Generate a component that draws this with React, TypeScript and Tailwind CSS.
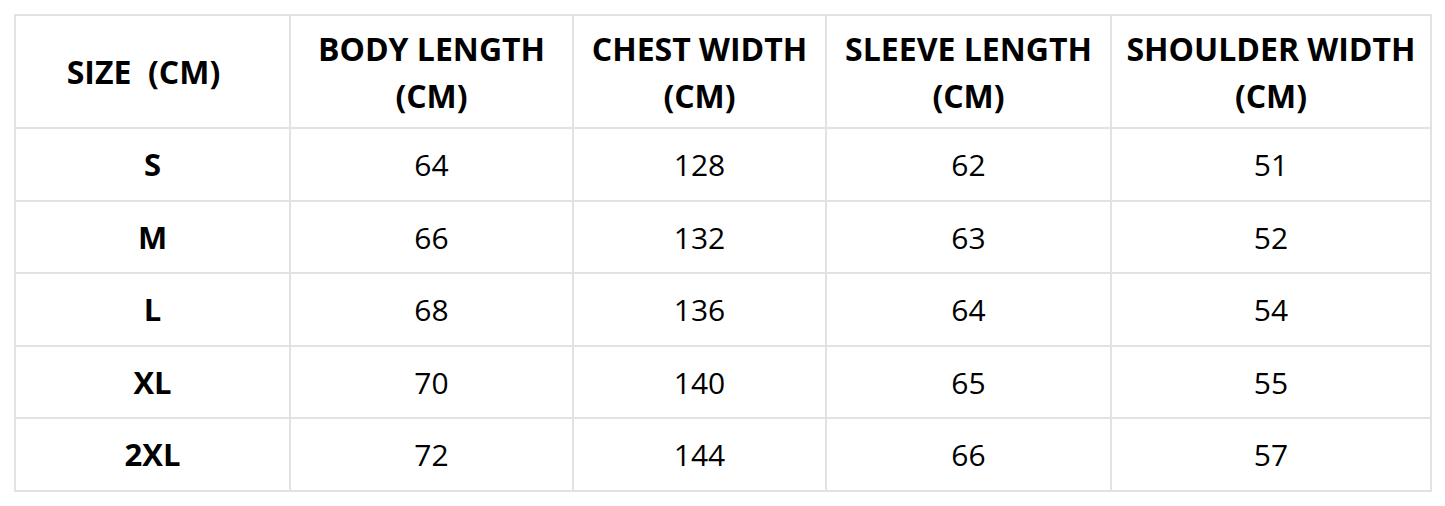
import React from 'react';

const headers = [
  ['SIZE  (CM)'],
  ['BODY LENGTH', '(CM)'],
  ['CHEST WIDTH', '(CM)'],
  ['SLEEVE LENGTH', '(CM)'],
  ['SHOULDER WIDTH', '(CM)'],
];

const rows = [
  ['S', '64', '128', '62', '51'],
  ['M', '66', '132', '63', '52'],
  ['L', '68', '136', '64', '54'],
  ['XL', '70', '140', '65', '55'],
  ['2XL', '72', '144', '66', '57'],
];

const App: React.FC = () => {
  return (
    <div className="w-[1445px] h-[506px] bg-white pt-[14px] pl-[14px] font-['Open_Sans',sans-serif] text-black">
      <div className="grid grid-cols-[273px_281px_251px_283px_318px] grid-rows-[111px_71px_70px_71px_70px_71px] gap-[2px] p-[2px] bg-[#e2e2e2] w-fit">
        {headers.map((h, i) => (
          <div
            key={i}
            className={`bg-white flex flex-col items-center justify-center font-bold text-[32px] leading-[47px] whitespace-pre ${i === 0 ? 'pr-[18px]' : ''}`}
          >
            {h.map((line) => (
              <span key={line}>{line}</span>
            ))}
          </div>
        ))}
        {rows.map((r) =>
          r.map((cell, j) => (
            <div
              key={r[0] + j}
              className={`bg-white flex items-center justify-center ${j === 0 ? 'font-bold text-[31px]' : 'text-[30px]'}`}
            >
              {cell}
            </div>
          ))
        )}
      </div>
    </div>
  );
};

export default App;
